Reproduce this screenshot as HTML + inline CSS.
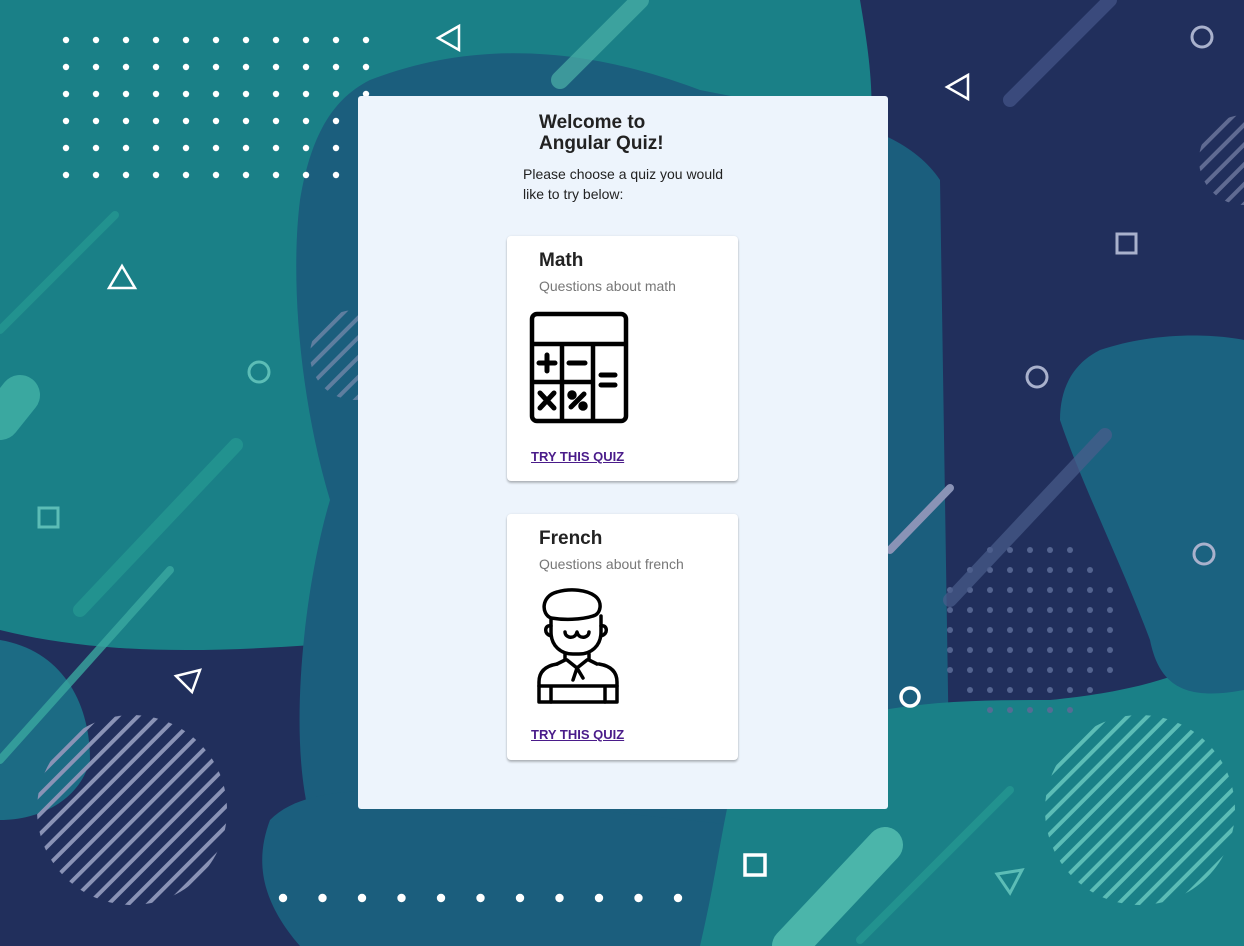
<!DOCTYPE html>
<html><head><meta charset="utf-8"><style>
html,body{margin:0;padding:0;width:1244px;height:946px;overflow:hidden;font-family:"Liberation Sans",Roboto,sans-serif}
#bg{position:absolute;left:0;top:0}
.panel{position:absolute;left:358px;top:96px;width:530px;height:713px;background:#edf4fc;border-radius:3px}
h1{position:absolute;left:181px;top:16px;margin:0;font-size:19px;line-height:21px;font-weight:bold;color:#222}
.intro{position:absolute;left:165px;top:68px;width:205px;font-size:14px;line-height:20px;color:#222}
.card{position:absolute;left:149px;width:231px;background:#fff;border-radius:4px;box-shadow:0 2px 2px rgba(0,0,0,.25),0 0 2px rgba(0,0,0,.08)}
.card .t{position:absolute;left:32px;top:14px;font-size:19px;font-weight:bold;color:#222}
.card .s{position:absolute;left:32px;top:42px;font-size:14px;color:#777}
.card a{position:absolute;left:24px;font-size:13px;font-weight:bold;color:#4a1c8a;text-decoration:underline}
.card svg{position:absolute}
</style></head><body>
<svg id="bg" width="1244" height="946" viewBox="0 0 1244 946">
<defs>
<pattern id="st" width="14" height="14" patternUnits="userSpaceOnUse" patternTransform="rotate(45)"><rect width="4" height="14" fill="#5cbdb6"/></pattern>
<pattern id="st2" width="14" height="14" patternUnits="userSpaceOnUse" patternTransform="rotate(45)"><rect width="4" height="14" fill="#8a93b6"/></pattern>
<pattern id="dt" width="20" height="20" patternUnits="userSpaceOnUse"><circle cx="10" cy="10" r="3" fill="#5a6a96"/></pattern>
</defs>
<rect width="1244" height="946" fill="#212f5c"/>
<path d="M0 0H860C870 60 880 120 860 190L380 640C250 650 120 660 0 630Z" fill="#1a8087"/>
<path d="M0 640C60 650 90 700 90 760C80 800 40 820 0 820Z" fill="#1c6b84"/>
<path d="M370 80C500 30 620 60 700 90C800 110 900 120 940 180L950 820L330 860C280 800 300 600 330 500C300 400 290 280 300 200C310 140 330 100 370 80Z" fill="#1b5e7d"/>
<path d="M270 820C310 780 400 790 500 800L780 830L760 946H300C260 900 255 860 270 820Z" fill="#1b5e7d"/>
<path d="M740 760C850 700 950 700 1050 700C1150 690 1200 670 1244 640V946H700C720 860 725 800 740 760Z" fill="#1a8087"/>
<path d="M1100 350C1160 330 1220 335 1244 340V690C1190 700 1160 690 1150 640C1120 560 1080 480 1060 420C1060 380 1080 360 1100 350Z" fill="#1b6280"/>
<circle cx="1030" cy="630" r="95" fill="url(#dt)" opacity=".9"/>
<circle cx="1140" cy="810" r="95" fill="url(#st)"/>
<circle cx="132" cy="810" r="95" fill="url(#st2)"/>
<circle cx="355" cy="355" r="45" fill="url(#st2)" opacity=".6"/>
<circle cx="1244" cy="160" r="45" fill="url(#st2)" opacity=".6"/>
<g stroke-linecap="round" fill="none">
<line x1="115" y1="215" x2="0" y2="330" stroke="#22928f" stroke-width="8"/>
<line x1="236" y1="445" x2="80" y2="610" stroke="#22928f" stroke-width="14"/>
<line x1="170" y1="570" x2="0" y2="760" stroke="#3aa8a0" stroke-width="8" opacity=".8"/>
<line x1="20" y1="395" x2="0" y2="420" stroke="#3aa8a0" stroke-width="40"/>
<line x1="640" y1="0" x2="560" y2="80" stroke="#4bb0a8" stroke-width="18" opacity=".7"/>
<line x1="1110" y1="0" x2="1010" y2="100" stroke="#3a4a7c" stroke-width="14"/>
<line x1="950" y1="488" x2="890" y2="550" stroke="#8a93b6" stroke-width="8"/>
<line x1="1105" y1="435" x2="950" y2="600" stroke="#4a5c8c" stroke-width="14" opacity=".7"/>
<line x1="1010" y1="790" x2="860" y2="940" stroke="#22928f" stroke-width="8"/>
<line x1="885" y1="845" x2="790" y2="946" stroke="#4bb5aa" stroke-width="36"/>
</g>
<g fill="none" stroke="#fff" stroke-width="2.5">
<path d="M459 26L438 38L459 50Z"/><path d="M968 75L947 87L968 99Z"/>
<path d="M122 266L109 288H135Z"/><path d="M176 676L200 670L192 692Z"/>
<circle cx="910" cy="697" r="9" stroke-width="3.5"/><rect x="745" y="855" width="20" height="20" stroke-width="3.5"/>
</g>
<g fill="none" stroke="#a9b1cc" stroke-width="3">
<circle cx="1202" cy="37" r="10"/><rect x="1117" y="234" width="19" height="19"/>
<circle cx="1037" cy="377" r="10"/><circle cx="1204" cy="554" r="10"/>
</g>
<g fill="none" stroke="#5cbdb6" stroke-width="3">
<circle cx="259" cy="372" r="10"/><rect x="39" y="508" width="19" height="19"/><path d="M997 874L1022 870L1010 893Z"/>
</g>
<g fill="#fff" id="dots"></g>
</svg>
<script>
var g=document.getElementById('dots'),s='';
for(var r=0;r<6;r++)for(var c=0;c<11;c++){if(r>=3&&c==10)continue;s+='<circle cx="'+(66+c*30)+'" cy="'+(40+r*27)+'" r="3.2"/>';}
for(var c=0;c<11;c++)s+='<circle cx="'+(283+c*39.5)+'" cy="898" r="4.2"/>';
g.innerHTML=s;
</script>
<div class="panel">
<h1>Welcome to<br>Angular Quiz!</h1>
<div class="intro">Please choose a quiz you would like to try below:</div>
<div class="card" style="top:140px;height:245px">
<div class="t">Math</div><div class="s">Questions about math</div>
<svg style="left:22px;top:75px" width="100" height="114" viewBox="0 0 100 114" fill="none" stroke="#000" stroke-width="4.5">
<rect x="3" y="3" width="94" height="107" rx="5"/><line x1="3" y1="33" x2="97" y2="33"/>
<line x1="3" y1="71" x2="64" y2="71"/><line x1="33" y1="33" x2="33" y2="110"/><line x1="64" y1="33" x2="64" y2="110"/>
<g stroke-linecap="round" stroke-width="5"><path d="M10 52H26M18 44V60M40 52H56M72 64H86M72 74H86M11 82L25 97M25 82L11 97M42 96L55 83"/></g>
<circle cx="43" cy="84" r="2.5" fill="#000"/><circle cx="54" cy="95" r="2.5" fill="#000"/>
</svg>
<a style="top:213px">TRY THIS QUIZ</a>
</div>
<div class="card" style="top:418px;height:246px">
<div class="t">French</div><div class="s">Questions about french</div>
<svg style="left:30px;top:74px" width="84" height="116" viewBox="0 0 84 116" fill="none" stroke="#000" stroke-width="3.5" stroke-linejoin="round" stroke-linecap="round">
<path d="M14 30C4 26 4 8 20 4C34 0 50 2 58 8C66 14 64 26 56 28C44 32 26 32 14 30Z"/>
<path d="M14 30V44C14 58 24 66 36 66H42C54 66 64 58 64 44V28"/>
<path d="M14 38C8 36 6 46 14 48M64 38C70 36 72 46 64 48"/>
<path d="M28 44C28 50 38 52 40 44C42 52 52 50 52 44"/>
<path d="M28 66V72L20 76M52 66V72L60 76M30 72L40 80L50 72M40 80L36 92M40 80L46 90"/>
<path d="M20 76C8 78 2 84 2 94V114H80V94C80 84 74 78 62 76"/>
<path d="M2 98H80M14 98V114M68 98V114"/>
</svg>
<a style="top:213px">TRY THIS QUIZ</a>
</div>
</div>
</body></html>
